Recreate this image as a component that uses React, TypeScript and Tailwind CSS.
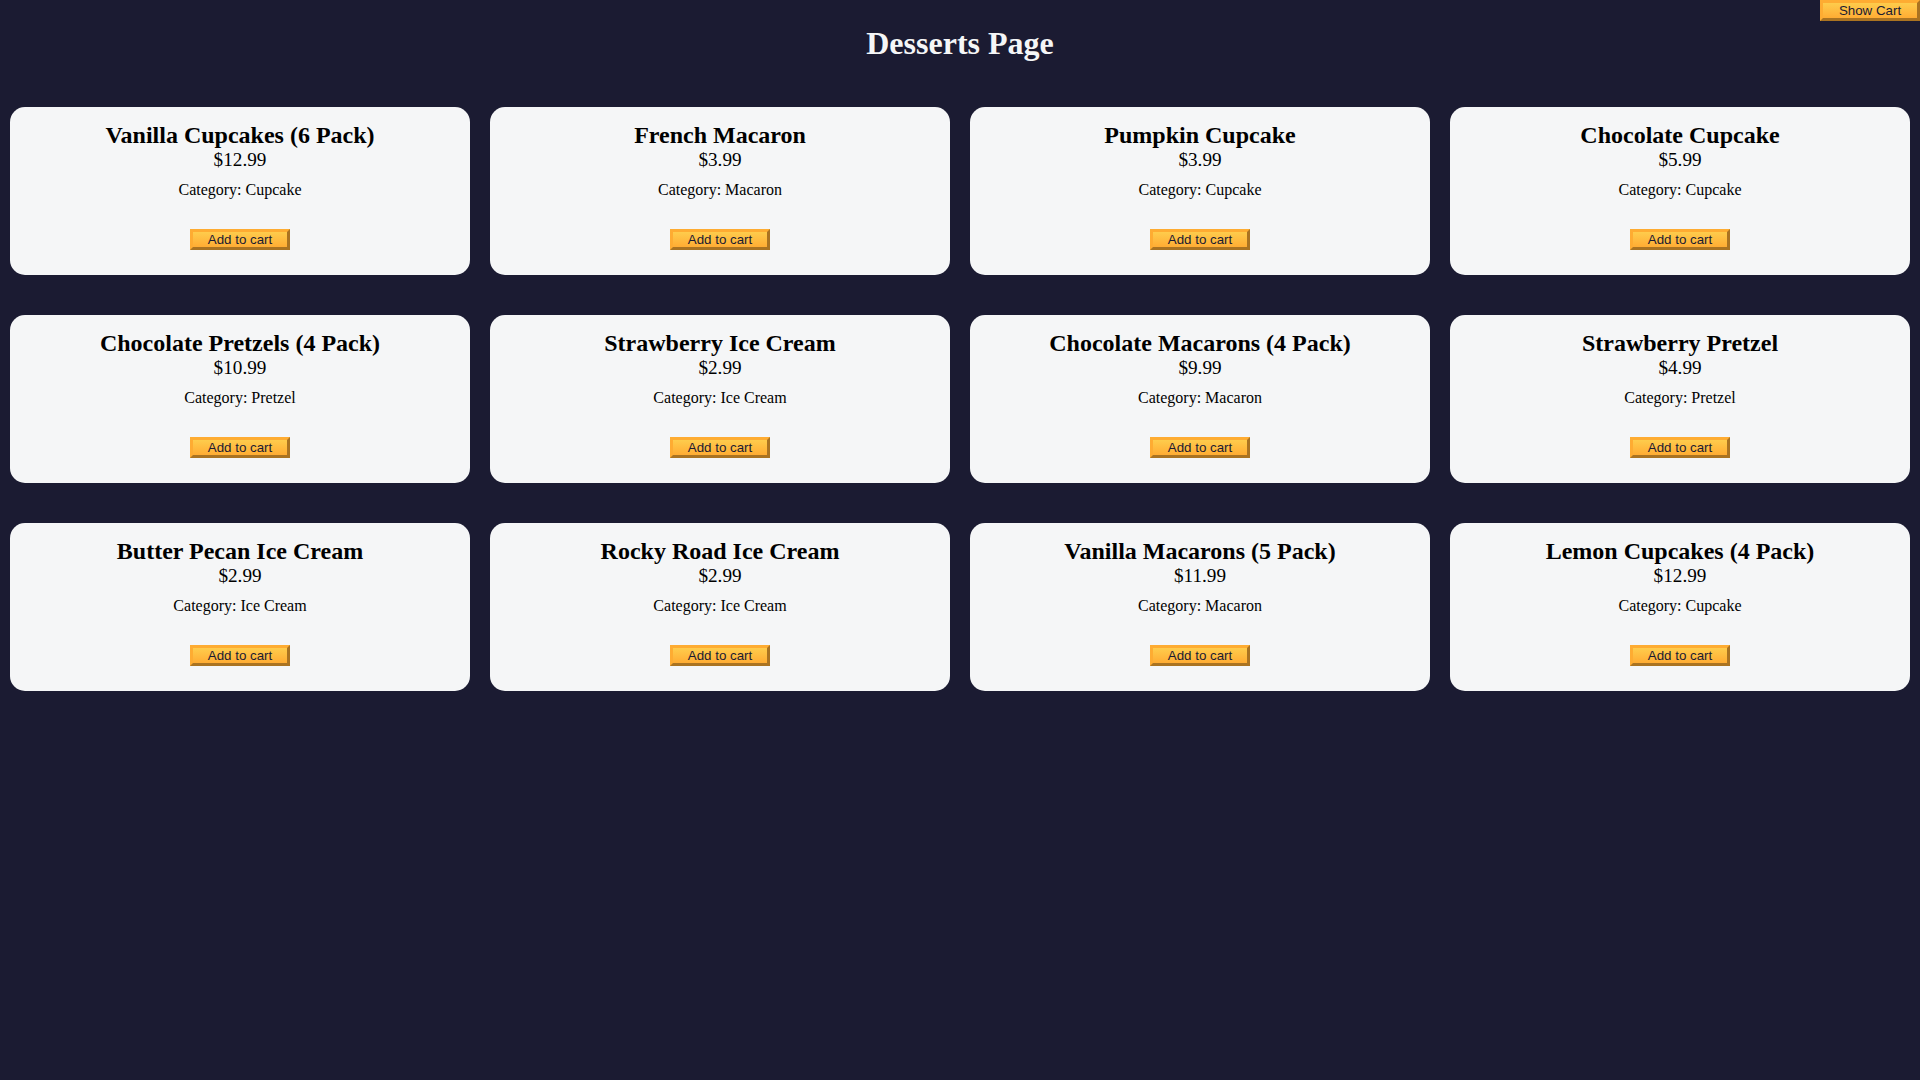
const desserts = [
  { id: 1, name: "Vanilla Cupcakes (6 Pack)", price: 12.99, category: "Cupcake" },
  { id: 2, name: "French Macaron", price: 3.99, category: "Macaron" },
  { id: 3, name: "Pumpkin Cupcake", price: 3.99, category: "Cupcake" },
  { id: 4, name: "Chocolate Cupcake", price: 5.99, category: "Cupcake" },
  { id: 5, name: "Chocolate Pretzels (4 Pack)", price: 10.99, category: "Pretzel" },
  { id: 6, name: "Strawberry Ice Cream", price: 2.99, category: "Ice Cream" },
  { id: 7, name: "Chocolate Macarons (4 Pack)", price: 9.99, category: "Macaron" },
  { id: 8, name: "Strawberry Pretzel", price: 4.99, category: "Pretzel" },
  { id: 9, name: "Butter Pecan Ice Cream", price: 2.99, category: "Ice Cream" },
  { id: 10, name: "Rocky Road Ice Cream", price: 2.99, category: "Ice Cream" },
  { id: 11, name: "Vanilla Macarons (5 Pack)", price: 11.99, category: "Macaron" },
  { id: 12, name: "Lemon Cupcakes (4 Pack)", price: 12.99, category: "Cupcake" },
];

const btn =
  "block w-[100px] h-[21px] cursor-pointer text-[13.33px] leading-none text-[#1b1b32] border-[3px] border-[#feac32] bg-[#feac32] bg-linear-to-b from-[#fecc4c] to-[#ffac33] font-['Liberation_Sans',Arial,sans-serif]";

export default function App() {
  return (
    <div className="relative min-h-screen bg-[#1b1b32] font-['Liberation_Serif','Times_New_Roman',serif]">
      <button className={`absolute top-0 right-0 ${btn}`} style={{ borderStyle: "outset" }}>
        Show Cart
      </button>
      <h1 className="text-center text-[32px] font-bold leading-[37px] text-[#f5f6f7] py-[25px]">
        Desserts Page
      </h1>
      <div className="grid grid-cols-4 gap-x-[20px] gap-y-[40px] px-[10px] py-[20px]">
        {desserts.map((d) => (
          <div key={d.id} className="bg-[#f5f6f7] rounded-[15px] p-[15px] text-center text-black">
            <h2 className="text-[24px] font-bold leading-[27px]">{d.name}</h2>
            <p className="text-[19.2px] leading-[21px]">${d.price}</p>
            <p className="text-[16px] leading-[18px] mt-[11px] mb-[30px]">Category: {d.category}</p>
            <button className={`mx-auto ${btn}`} style={{ borderStyle: "outset" }}>
              Add to cart
            </button>
            <div className="h-[10px]" />
          </div>
        ))}
      </div>
    </div>
  );
}
